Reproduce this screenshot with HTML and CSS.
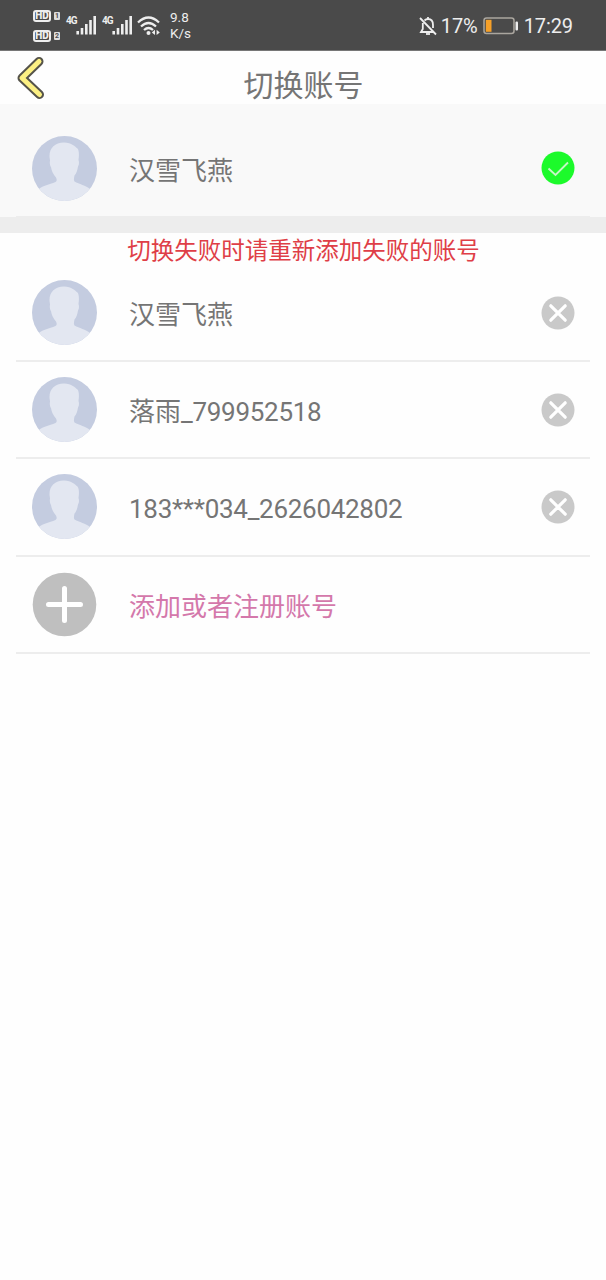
FILE: index.html
```html
<!DOCTYPE html>
<html lang="zh-CN">
<head>
<meta charset="utf-8">
<title>切换账号</title>
<link rel="stylesheet" href="styles.css">
</head>
<body>
<svg class="defs" width="0" height="0">
  <defs>
    <clipPath id="disc"><circle cx="32.5" cy="32.5" r="32.5"/></clipPath>
    <symbol id="avatar" viewBox="0 0 65 65">
      <g clip-path="url(#disc)">
        <rect width="65" height="65" fill="#c4cce0"/>
        <path fill="#e3e7f1" d="M32 6.500C23 6.500 17.500 12 17.500 20C17.500 22 18 23.500 18 25C17.500 26 18 30 19 31C19.500 35 21.500 38.500 24 41.500C25 44 25 45 23.500 46C17 48.500 11 49.500 7 53L0 65H65L58 53C54 49.500 47 48 42.500 45.500C41.500 44 42 42 42.500 39.500C44.500 37.500 45.500 34 46 30.500C47.500 28 47 25.500 46.500 24C47 21 47.500 15 45.500 12.500C43 10.500 40 7 32 6.500Z"/>
      </g>
    </symbol>
    <symbol id="remove" viewBox="0 0 34 34">
      <circle cx="17" cy="17" r="16.500" fill="#c9c9c9"/>
      <path d="M9.800 9.800L24.200 24.200M24.200 9.800L9.800 24.200" stroke="#fff" stroke-width="3.200" stroke-linecap="round"/>
    </symbol>
    <symbol id="signal" viewBox="0 0 20 20">
      <path d="M1.700 15V18.500M6 12V18.500M10.300 8V18.500M14.500 4V18.500M18.700 0V18.500" stroke="#eee" stroke-width="2.600"/>
    </symbol>
  </defs>
</svg>
<div class="statusbar">
  <div class="sims">
    <div class="sim"><span class="hd">HD</span><span class="slot">1</span></div>
    <div class="sim"><span class="hd">HD</span><span class="slot">2</span></div>
  </div>
  <span class="net">4G</span><svg class="signal"><use href="#signal"/></svg>
  <span class="net second">4G</span><svg class="signal"><use href="#signal"/></svg>
  <svg class="wifi" viewBox="0 0 24 20" fill="none" stroke="#eee" stroke-width="2.300">
    <path d="M1 6.500Q11.500-3.500 22 6.500M4 10.500Q11.500 3.500 19 10.500M7 14Q11.500 10 16 14"/>
    <circle cx="11.500" cy="17" r="2" fill="#eee" stroke="none"/>
    <path d="M18 13.800V19L14.800 16.400ZM19.600 13.800V19L22.800 16.400Z" fill="#eee" stroke="none"/>
  </svg>
  <div class="speed"><span>9.8</span><span>K/s</span></div>
  <div class="right">
    <svg class="bell" viewBox="0 0 18 20" fill="none" stroke="#eee" stroke-width="1.800">
      <path d="M5.500 4.500Q7 3 9 3Q14 3 14 9V12M3.800 7V13L2 16H14M1 2L17 18.500M9 1V3"/>
      <path d="M7 18H11"/>
    </svg>
    <span class="percent">17%</span>
    <svg class="battery" viewBox="0 0 36 18">
      <rect x="1" y="1" width="30" height="15.500" rx="2.500" fill="none" stroke="#aaa69f" stroke-width="1.500"/>
      <rect x="2.800" y="2.800" width="5.700" height="12" fill="#f6a028"/>
      <rect x="32.500" y="4.500" width="2.500" height="9" rx="1" fill="#eee"/>
    </svg>
    <span class="clock">17:29</span>
  </div>
</div>
<header class="header">
  <svg class="back" viewBox="0 0 28 44" fill="none" stroke-linecap="round" stroke-linejoin="round">
    <path d="M22 5.500L5 22L22.500 38.500" stroke="#55534a" stroke-width="9"/>
    <path d="M22 5.500L5 22L22.500 38.500" stroke="#fcf083" stroke-width="5"/>
  </svg>
  <h1 class="title">切换账号</h1>
</header>
<section class="current">
  <div class="current-row">
    <svg class="avatar"><use href="#avatar"/></svg>
    <span class="name">汉雪飞燕</span>
    <svg class="action" viewBox="0 0 34 34"><circle cx="17" cy="17" r="16.500" fill="#1cfa2b"/><path d="M7.500 17.500L14.500 24L27 11.500" fill="none" stroke="#c5f6c6" stroke-width="1.900"/></svg>
  </div>
</section>
<div class="divider"></div>
<p class="notice">切换失败时请重新添加失败的账号</p>
<main class="accounts">
  <div class="row"><svg class="avatar"><use href="#avatar"/></svg><span class="name">汉雪飞燕</span><svg class="action"><use href="#remove"/></svg></div>
  <div class="row"><svg class="avatar"><use href="#avatar"/></svg><span class="name">落雨<span class="latin">_799952518</span></span><svg class="action"><use href="#remove"/></svg></div>
  <div class="row"><svg class="avatar"><use href="#avatar"/></svg><span class="name"><span class="latin">183***034_2626042802</span></span><svg class="action"><use href="#remove"/></svg></div>
  <div class="row"><svg class="avatar" viewBox="0 0 65 65"><circle cx="32.500" cy="32.500" r="31.800" fill="#bfbfbf"/><path d="M32.500 16.500V48.500M16.500 32.500H48.500" stroke="#fff" stroke-width="5" stroke-linecap="round"/></svg><span class="name add">添加或者注册账号</span></div>
</main>
</body>
</html>
```

FILE: styles.css
```css
* { box-sizing: border-box; }
body {
  margin: 0;
  min-height: 1280px;
  background: #fefefe;
  color: #757575;
  font-family: Roboto, "Noto Sans CJK SC", sans-serif;
}
.defs { display: block; }
.statusbar {
  display: flex;
  height: 51px;
  padding: 0 33px;
  background: #4a4a4a;
  border-bottom: 1px solid #777;
  color: #eee;
}
.sims {
  display: flex;
  flex-direction: column;
  gap: 8px;
  width: 33px;
  padding-top: 10px;
}
.sim { display: flex; align-items: center; gap: 3px; height: 12px; }
.hd {
  width: 18px;
  height: 12px;
  border: 2px solid #eee;
  border-radius: 3px;
  font: 900 10px/8px Roboto, sans-serif;
  text-align: center;
}
.slot {
  width: 6px;
  height: 8px;
  border-radius: 1px;
  background: #ddd;
  color: #4a4a4a;
  font: bold 7px/8px Roboto, sans-serif;
  text-align: center;
}
.net {
  width: 10px;
  margin-top: 15px;
  font: bold 10px/11px Roboto, sans-serif;
  letter-spacing: -1px;
}
.net.second { margin-left: 6px; }
.signal { width: 20px; height: 20px; margin-top: 16px; }
.wifi { width: 24px; height: 20px; margin: 16px 0 0 5px; }
.speed {
  display: flex;
  flex-direction: column;
  margin: 9px 0 0 9px;
  font-size: 13.500px;
  line-height: 16px;
}
.right { display: flex; align-items: center; padding-top: 1px; margin-left: auto; font-size: 20px; }
.bell { width: 18px; height: 20px; margin-right: 4px; }
.battery { width: 36px; height: 18px; margin: 0 5px; }
.percent, .clock { letter-spacing: -0.100px; }
.header {
  display: grid;
  grid-template-columns: 60px 1fr 60px;
  height: 53px;
}
.back { width: 28px; height: 44px; margin: 5px 0 0 17px; }
.title {
  margin: 13px 0 0 1px;
  font-size: 30px;
  font-weight: 400;
  line-height: 44px;
  text-align: center;
}
.current {
  height: 113px;
  padding: 0 16px;
  background: #f9f9f9;
}
.current-row {
  display: flex;
  align-items: center;
  height: 113px;
  padding: 16px 15px 0 16px;
  border-bottom: 1px solid #ededed;
}
.divider { height: 16px; background: #ededed; }
.avatar { flex: none; width: 65px; height: 65px; }
.name {
  flex: 1;
  padding-top: 5px;
  margin-left: 32px;
  font-size: 26px;
  line-height: 38px;
}
.row .latin { letter-spacing: -0.290px; }
.name.add { color: #d478ab; }
.action { flex: none; width: 34px; height: 34px; }
.notice {
  height: 32px;
  margin: 0;
  padding-left: 1px;
  color: #df3e47;
  font-size: 23.500px;
  line-height: 36px;
  text-align: center;
}
.accounts { padding: 0 16px; }
.row {
  display: flex;
  align-items: center;
  height: 97.200px;
  padding: 0 15px 0 16px;
  border-bottom: 2px solid #ededed;
}
```
